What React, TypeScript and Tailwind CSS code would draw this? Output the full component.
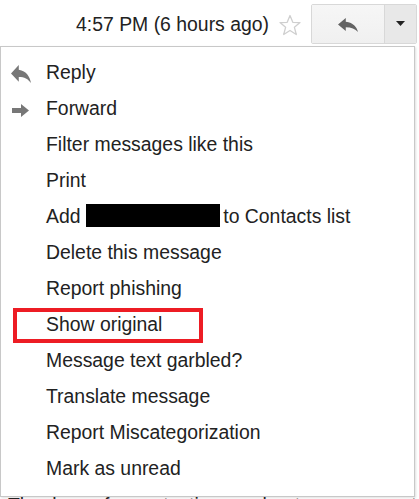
const items = [
  'Reply',
  'Forward',
  'Filter messages like this',
  'Print',
  'Add',
  'Delete this message',
  'Report phishing',
  'Show original',
  'Message text garbled?',
  'Translate message',
  'Report Miscategorization',
  'Mark as unread',
];

function ReplyIcon({ w, h, color }: { w: number; h: number; color: string }) {
  return (
    <svg width={w} height={h} viewBox="3 5 18 15" preserveAspectRatio="none">
      <path d="M10 9V5l-7 7 7 7v-4.1c5 0 8.5 1.6 11 5.1-1-5-4-10-11-11z" fill={color} />
    </svg>
  );
}

function ForwardIcon() {
  return (
    <svg width="17" height="13" viewBox="0 0 17 13">
      <path d="M0 4H9V0L17 6.5L9 13V9H0Z" fill="#777" />
    </svg>
  );
}

function StarIcon() {
  return (
    <svg width="24" height="22" viewBox="0 0 24 22">
      <polygon
        points="12,1.5 14.8,8.3 22,8.6 16.4,13.3 18.3,20.5 12,16.5 5.7,20.5 7.6,13.3 2,8.6 9.2,8.3"
        fill="none"
        stroke="#cfcfcf"
        strokeWidth="1.3"
        strokeLinejoin="round"
      />
    </svg>
  );
}

export default function App() {
  return (
    <div className="h-[499px] w-[419px] overflow-hidden bg-white font-['Liberation_Sans',Arial,sans-serif] text-[19.4px] text-[#222]">
      <div className="flex h-[46px] items-center justify-end pt-[2px] pr-[2px]">
        <span className="mt-[2px] leading-none">4:57 PM (6 hours ago)</span>
        <div className="ml-[9px] mt-[1px] flex items-center">
          <StarIcon />
        </div>
        <div className="ml-[9px] flex h-10 overflow-hidden rounded-[2px] border border-[#d8d8d8]">
          <div className="flex w-[72px] items-center justify-center bg-gradient-to-b from-[#f6f6f6] to-[#f0f0f0] pt-[1px]">
            <ReplyIcon w={20} h={14} color="#636363" />
          </div>
          <div className="flex w-[32px] items-center justify-center border-l border-[#d8d8d8] bg-[#e8e8e8] pb-[2px]">
            <svg width="9" height="5" viewBox="0 0 9 5">
              <polygon points="0,0 9,0 4.5,5" fill="#222" />
            </svg>
          </div>
        </div>
      </div>

      <div className="w-[415px] border border-[#c8c8c8] bg-white pt-[8px] pb-[9px] shadow-[1px_1px_2px_rgba(0,0,0,0.12)]">
        {items.map((label, i) => (
          <div key={label} className="relative flex h-9 items-center pl-[45px]">
            {i === 0 && (
              <div className="absolute left-[10px] top-[10px]">
                <ReplyIcon w={20} h={18} color="#777" />
              </div>
            )}
            {i === 1 && (
              <div className="absolute left-[11px] top-[13px]">
                <ForwardIcon />
              </div>
            )}
            {label === 'Add' ? (
              <span className="whitespace-nowrap">
                Add <span className="inline-block h-[23px] w-[134px] bg-black align-[-4px]"></span>
                <span className="-ml-[2px]"> to Contacts list</span>
              </span>
            ) : (
              <span className="whitespace-nowrap">{label}</span>
            )}
            {label === 'Show original' && (
              <div className="absolute left-[12px] top-[1px] h-[35px] w-[190px] border-4 border-[#ed1c24]"></div>
            )}
          </div>
        ))}
      </div>
      <div className="-mt-[1px] whitespace-nowrap pl-[8px] leading-none text-[#222]">
        Thank you for contacting us about your account today
      </div>
    </div>
  );
}
